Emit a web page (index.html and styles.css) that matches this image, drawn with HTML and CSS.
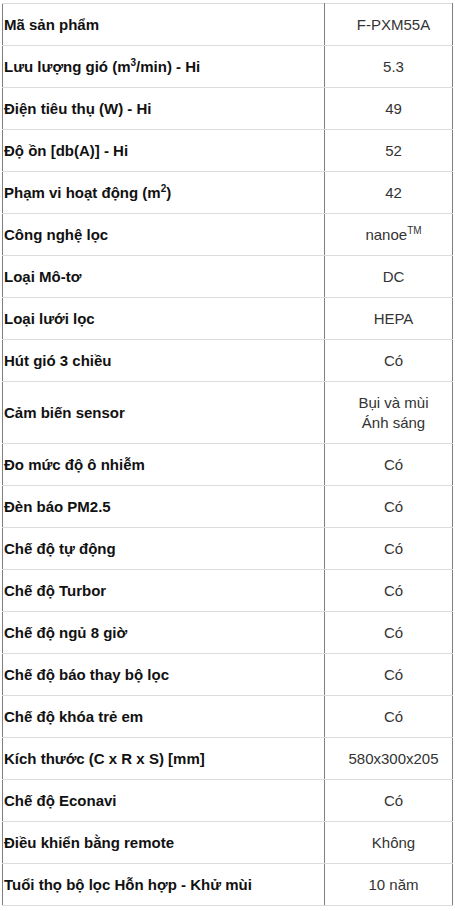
FILE: index.html
```html
<!DOCTYPE html>
<html lang="vi">
<head>
<meta charset="utf-8">
<title>Thông số kỹ thuật F-PXM55A</title>
<link rel="stylesheet" href="styles.css">
</head>
<body>
<table class="spec">
  <tbody>
    <tr><td class="label">Mã sản phẩm</td><td class="value">F-PXM55A</td></tr>
    <tr><td class="label">Lưu lượng gió (m<sup>3</sup>/min) - Hi</td><td class="value">5.3</td></tr>
    <tr><td class="label">Điện tiêu thụ (W) - Hi</td><td class="value">49</td></tr>
    <tr><td class="label">Độ ồn [db(A)] - Hi</td><td class="value">52</td></tr>
    <tr><td class="label">Phạm vi hoạt động (m<sup>2</sup>)</td><td class="value">42</td></tr>
    <tr><td class="label">Công nghệ lọc</td><td class="value">nanoe<sup>TM</sup></td></tr>
    <tr><td class="label">Loại Mô-tơ</td><td class="value">DC</td></tr>
    <tr><td class="label">Loại lưới lọc</td><td class="value">HEPA</td></tr>
    <tr><td class="label">Hút gió 3 chiều</td><td class="value">Có</td></tr>
    <tr><td class="label">Cảm biến sensor</td><td class="value">Bụi và mùi<br>Ánh sáng</td></tr>
    <tr><td class="label">Đo mức độ ô nhiễm</td><td class="value">Có</td></tr>
    <tr><td class="label">Đèn báo PM2.5</td><td class="value">Có</td></tr>
    <tr><td class="label">Chế độ tự động</td><td class="value">Có</td></tr>
    <tr><td class="label">Chế độ Turbor</td><td class="value">Có</td></tr>
    <tr><td class="label">Chế độ ngủ 8 giờ</td><td class="value">Có</td></tr>
    <tr><td class="label">Chế độ báo thay bộ lọc</td><td class="value">Có</td></tr>
    <tr><td class="label">Chế độ khóa trẻ em</td><td class="value">Có</td></tr>
    <tr><td class="label">Kích thước (C x R x S) [mm]</td><td class="value">580x300x205</td></tr>
    <tr><td class="label">Chế độ Econavi</td><td class="value">Có</td></tr>
    <tr><td class="label">Điều khiển bằng remote</td><td class="value">Không</td></tr>
    <tr><td class="label">Tuổi thọ bộ lọc Hỗn hợp - Khử mùi</td><td class="value">10 năm</td></tr>
  </tbody>
</table>
</body>
</html>
```
FILE: styles.css
```css
html, body {
  margin: 0;
  padding: 0;
  background: #fff;
}
body {
  padding: 3px 0 0 2px;
  font-family: "Liberation Sans", Arial, sans-serif;
  font-size: 15px;
  line-height: 20px;
  color: #000;
}
.spec {
  border-collapse: collapse;
  width: 451px;
  table-layout: fixed;
}
.spec td {
  padding: 11px 0 10px 0;
  border-top: 1px solid #dcdcdc;
  border-bottom: 1px solid #dcdcdc;
  border-left: 1px solid #7f7f7f;
  border-right: 1px solid #7f7f7f;
  vertical-align: middle;
}
.spec .label {
  width: 320px;
  padding-left: 1px;
  font-weight: bold;
  color: #111;
}
.spec .value {
  padding-left: 10px;
  text-align: center;
  color: #333;
}
.spec sup {
  font-size: 10px;
  line-height: 0;
  vertical-align: 6px;
}
```
